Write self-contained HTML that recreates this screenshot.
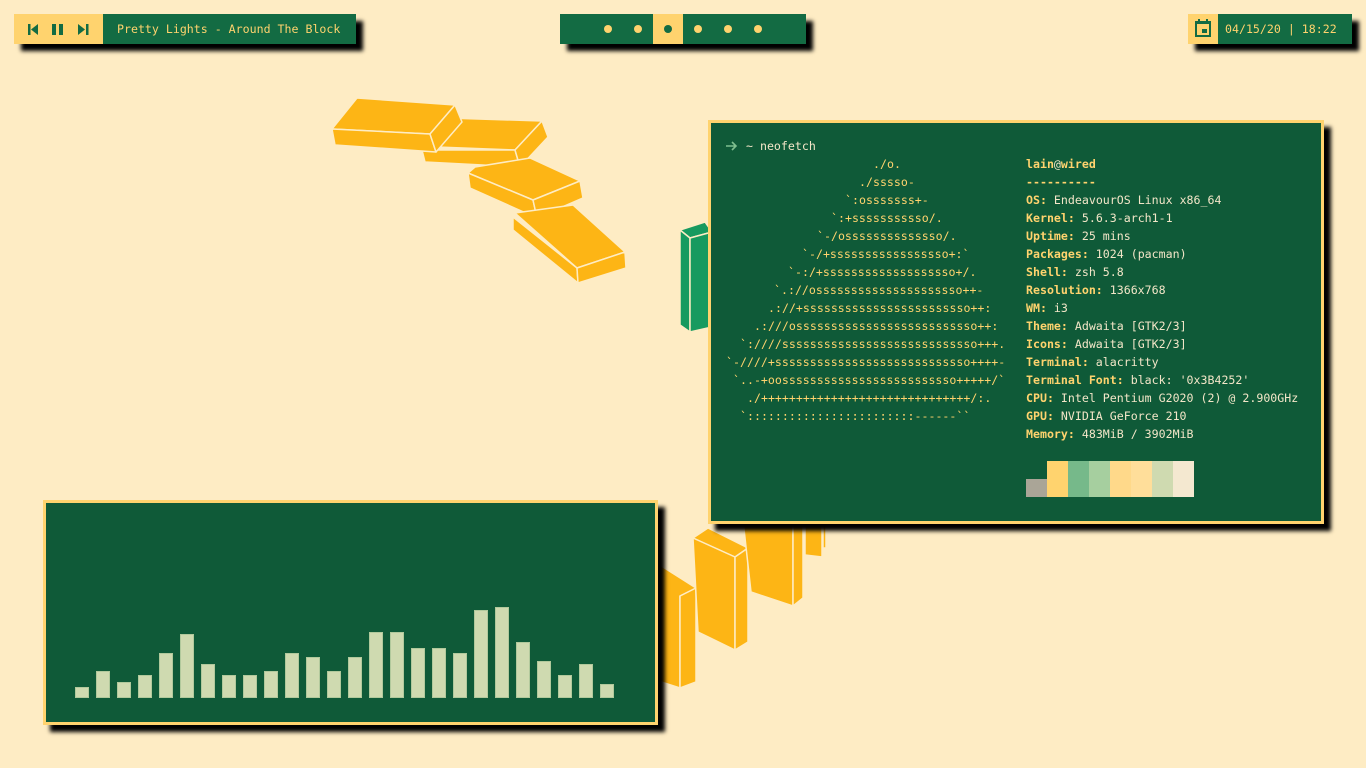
<!DOCTYPE html>
<html><head><meta charset="utf-8"><style>
*{margin:0;padding:0;box-sizing:border-box}
body{width:1366px;height:768px;background:#feecc4;position:relative;overflow:hidden;font-family:"DejaVu Sans Mono","Liberation Mono",monospace;font-size:11.6px}
.abs{position:absolute}
.bar{position:absolute;height:30px;background:#136b43;box-shadow:7px 7px 4px #000}
.y{background:#ffd36e}
.panel{position:absolute;background:#0f5a38;border:3px solid #ffd36e;box-shadow:7px 7px 4px #000}
.ln{position:absolute;white-space:pre;color:#ffd36e;line-height:18px;height:18px}
.info{position:absolute;left:1026px;white-space:pre;line-height:18px;color:#f3e6c8}
.info b{color:#ffd36e}
.cb{position:absolute;width:14px;background:#cfdab0;box-shadow:0 0 0 1px rgba(120,170,120,.35) inset}
</style></head><body>

<svg class="abs" style="left:0;top:0" width="1366" height="768">
<g fill="#fdb515" stroke="#feecc4" stroke-width="1.5" stroke-linejoin="round">
<polygon points="447,118 542,121 515,150 437,147"/>
<polygon points="422,150 515,150 520,167 425,162"/>
<polygon points="515,150 542,121 548,137 520,167"/>
<polygon points="357,98 455,105 430,134 332,129"/>
<polygon points="332,129 430,134 436,152 335,145"/>
<polygon points="430,134 455,105 462,122 436,152"/>
<polygon points="475,167 530,158 580,181 533,200 468,173"/>
<polygon points="468,173 533,200 537,218 470,188"/>
<polygon points="533,200 580,181 583,198 537,218"/>
<polygon points="515,213 573,205 625,252 577,268"/>
<polygon points="513,217 577,268 578,283 513,230"/>
<polygon points="577,268 625,252 626,268 578,283"/>
<polygon points="655,562 696,588 680,596 680,688 655,680"/>
<polygon points="680,596 696,588 696,682 680,688"/>
<polygon points="693,538 708,528 748,548 735,557"/>
<polygon points="693,538 735,557 735,650 698,632"/>
<polygon points="735,557 748,548 748,642 735,650"/>
<polygon points="743,520 793,520 793,606 751,592"/>
<polygon points="793,520 803,520 803,598 793,606"/>
<polygon points="805,520 822,520 822,557 805,555"/>
<polygon points="823,520 826,520 826,548 823,548"/>
</g>
<g fill="#179a5f" stroke="#feecc4" stroke-width="1.5" stroke-linejoin="round">
<polygon points="680,230 705,222 712,232 690,238"/>
<polygon points="680,230 690,238 690,332 680,325"/>
<polygon points="690,238 712,232 712,327 690,332"/>
</g>
</svg>

<div class="bar" style="left:14px;top:14px;width:342px"></div>
<div class="abs y" style="left:14px;top:14px;width:89px;height:30px"></div>
<svg class="abs" style="left:14px;top:14px" width="89" height="30">
<g fill="#136b43">
<rect x="14" y="10" width="2.5" height="11"/><polygon points="24,10 24,21 17,15.5"/>
<rect x="38" y="10" width="4" height="11"/><rect x="45" y="10" width="4" height="11"/>
<polygon points="64,10 64,21 71,15.5"/><rect x="72" y="10" width="2.5" height="11"/>
</g></svg>
<div class="abs" style="left:117px;top:21px;color:#ffd36e;line-height:16px">Pretty Lights - Around The Block</div>

<div class="bar" style="left:560px;top:14px;width:246px"></div>
<div class="abs y" style="left:653px;top:14px;width:30px;height:30px"></div>
<svg class="abs" style="left:560px;top:14px" width="246" height="30">
<g fill="#ffd36e"><circle cx="48" cy="15" r="4"/><circle cx="78" cy="15" r="4"/><circle cx="138" cy="15" r="4"/><circle cx="168" cy="15" r="4"/><circle cx="198" cy="15" r="4"/></g>
<circle cx="108" cy="15" r="4" fill="#136b43"/>
</svg>

<div class="bar" style="left:1188px;top:14px;width:164px"></div>
<div class="abs y" style="left:1188px;top:14px;width:30px;height:30px"></div>
<svg class="abs" style="left:1188px;top:14px" width="30" height="30">
<g fill="#136b43"><rect x="7" y="7" width="16" height="3"/><rect x="7" y="7" width="2" height="16"/><rect x="21" y="7" width="2" height="16"/><rect x="7" y="21" width="16" height="2"/><rect x="10" y="5" width="2" height="4"/><rect x="18" y="5" width="2" height="4"/><rect x="14" y="15" width="5" height="4"/></g>
</svg>
<div class="abs" style="left:1225px;top:21px;color:#ffd36e;line-height:16px">04/15/20 | 18:22</div>

<div class="panel" style="left:708px;top:120px;width:616px;height:404px"></div>
<svg class="abs" style="left:725px;top:140px" width="14" height="12"><path d="M1 6H11M7 2L11 6L7 10" stroke="#7fbf8f" stroke-width="1.6" fill="none"/></svg>
<div class="ln" style="left:746px;top:137px;color:#f3e6c8">~ neofetch</div>
<div class="ln" style="left:873px;top:155px">./o.</div>
<div class="ln" style="left:859px;top:173px">./sssso-</div>
<div class="ln" style="left:845px;top:191px">`:osssssss+-</div>
<div class="ln" style="left:831px;top:209px">`:+sssssssssso/.</div>
<div class="ln" style="left:817px;top:227px">`-/ossssssssssssso/.</div>
<div class="ln" style="left:802px;top:245px">`-/+sssssssssssssssso+:`</div>
<div class="ln" style="left:788px;top:263px">`-:/+sssssssssssssssssso+/.</div>
<div class="ln" style="left:774px;top:281px">`.://osssssssssssssssssssso++-</div>
<div class="ln" style="left:768px;top:299px">.://+ssssssssssssssssssssssso++:</div>
<div class="ln" style="left:754px;top:317px">.:///ossssssssssssssssssssssssso++:</div>
<div class="ln" style="left:740px;top:335px">`:////ssssssssssssssssssssssssssso+++.</div>
<div class="ln" style="left:726px;top:353px">`-////+ssssssssssssssssssssssssssso++++-</div>
<div class="ln" style="left:733px;top:371px">`..-+oosssssssssssssssssssssssso+++++/`</div>
<div class="ln" style="left:747px;top:389px">./++++++++++++++++++++++++++++++/:.</div>
<div class="ln" style="left:740px;top:407px">`::::::::::::::::::::::::------``</div>

<div class="info" style="top:155px"><b>lain</b><span style="color:#f3e6c8">@</span><b>wired</b>
<b>----------</b>
<b>OS:</b> EndeavourOS Linux x86_64
<b>Kernel:</b> 5.6.3-arch1-1
<b>Uptime:</b> 25 mins
<b>Packages:</b> 1024 (pacman)
<b>Shell:</b> zsh 5.8
<b>Resolution:</b> 1366x768
<b>WM:</b> i3
<b>Theme:</b> Adwaita [GTK2/3]
<b>Icons:</b> Adwaita [GTK2/3]
<b>Terminal:</b> alacritty
<b>Terminal Font:</b> black: '0x3B4252'
<b>CPU:</b> Intel Pentium G2020 (2) @ 2.900GHz
<b>GPU:</b> NVIDIA GeForce 210
<b>Memory:</b> 483MiB / 3902MiB</div>

<div class="abs" style="left:1026px;top:479px;width:21px;height:18px;background:#aaa597"></div>
<div class="abs" style="left:1047px;top:461px;width:21px;height:36px;background:#ffd36e"></div>
<div class="abs" style="left:1068px;top:461px;width:21px;height:36px;background:#76b98a"></div>
<div class="abs" style="left:1089px;top:461px;width:21px;height:36px;background:#a6cf9f"></div>
<div class="abs" style="left:1110px;top:461px;width:21px;height:36px;background:#ffd98a"></div>
<div class="abs" style="left:1131px;top:461px;width:21px;height:36px;background:#ffde9a"></div>
<div class="abs" style="left:1152px;top:461px;width:21px;height:36px;background:#cfdab0"></div>
<div class="abs" style="left:1173px;top:461px;width:21px;height:36px;background:#f4e8d0"></div>

<div class="panel" style="left:43px;top:500px;width:615px;height:225px"></div>
<div class="cb" style="left:75px;top:687px;height:11px"></div>
<div class="cb" style="left:96px;top:671px;height:27px"></div>
<div class="cb" style="left:117px;top:682px;height:16px"></div>
<div class="cb" style="left:138px;top:675px;height:23px"></div>
<div class="cb" style="left:159px;top:653px;height:45px"></div>
<div class="cb" style="left:180px;top:634px;height:64px"></div>
<div class="cb" style="left:201px;top:664px;height:34px"></div>
<div class="cb" style="left:222px;top:675px;height:23px"></div>
<div class="cb" style="left:243px;top:675px;height:23px"></div>
<div class="cb" style="left:264px;top:671px;height:27px"></div>
<div class="cb" style="left:285px;top:653px;height:45px"></div>
<div class="cb" style="left:306px;top:657px;height:41px"></div>
<div class="cb" style="left:327px;top:671px;height:27px"></div>
<div class="cb" style="left:348px;top:657px;height:41px"></div>
<div class="cb" style="left:369px;top:632px;height:66px"></div>
<div class="cb" style="left:390px;top:632px;height:66px"></div>
<div class="cb" style="left:411px;top:648px;height:50px"></div>
<div class="cb" style="left:432px;top:648px;height:50px"></div>
<div class="cb" style="left:453px;top:653px;height:45px"></div>
<div class="cb" style="left:474px;top:610px;height:88px"></div>
<div class="cb" style="left:495px;top:607px;height:91px"></div>
<div class="cb" style="left:516px;top:642px;height:56px"></div>
<div class="cb" style="left:537px;top:661px;height:37px"></div>
<div class="cb" style="left:558px;top:675px;height:23px"></div>
<div class="cb" style="left:579px;top:664px;height:34px"></div>
<div class="cb" style="left:600px;top:684px;height:14px"></div>
</body></html>
